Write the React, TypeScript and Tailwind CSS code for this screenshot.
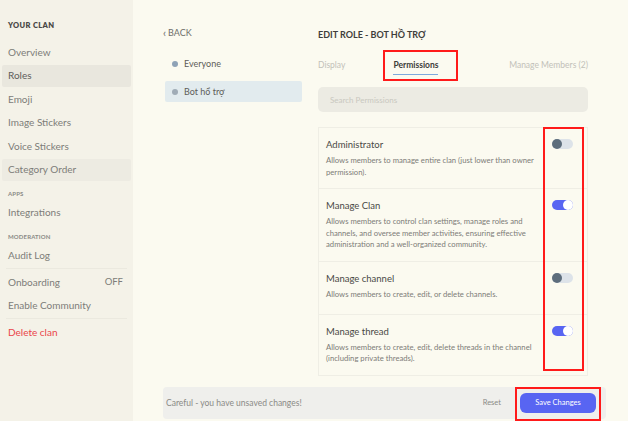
import React from 'react';

type NavItem = { label: string; active?: boolean; soft?: boolean; right?: string; danger?: boolean };

const font = { fontFamily: 'Lato, "Noto Sans", sans-serif' };

// Sidebar groups
const clanItems: NavItem[] = [
  { label: 'Overview' },
  { label: 'Roles', active: true },
  { label: 'Emoji' },
  { label: 'Image Stickers' },
  { label: 'Voice Stickers' },
  { label: 'Category Order', soft: true },
];

const permissions = [
  {
    title: 'Administrator',
    desc: 'Allows members to manage entire clan (just lower than owner permission).',
    on: false,
  },
  {
    title: 'Manage Clan',
    desc: 'Allows members to control clan settings, manage roles and channels, and oversee member activities, ensuring effective administration and a well-organized community.',
    on: true,
  },
  {
    title: 'Manage channel',
    desc: 'Allows members to create, edit, or delete channels.',
    on: false,
  },
  {
    title: 'Manage thread',
    desc: 'Allows members to create, edit, delete threads in the channel (including private threads).',
    on: true,
  },
];

const SideItem: React.FC<{ item: NavItem }> = ({ item }) => (
  <div
    className={`mx-[2px] mb-[1.5px] flex h-[22px] items-center justify-between rounded-[2px] pl-[6px] pr-[6px] text-[10px] ${
      item.active ? 'bg-[#e9e7de] text-[#5e5e5b]' : item.soft ? 'bg-[#edebe2] text-[#7d7d79]' : 'text-[#7d7d79]'
    } ${item.danger ? 'text-[#ea4549]' : ''}`}
  >
    <span>{item.label}</span>
    {item.right && <span className="mr-[2px] text-[9.5px]">{item.right}</span>}
  </div>
);

const GroupLabel: React.FC<{ text: string }> = ({ text }) => (
  <div className="mt-[9px] mb-[4px] h-[8px] pl-[8px] text-[6px] font-bold leading-[8px] tracking-wide text-[#8a8a86]">
    {text}
  </div>
);

const Toggle: React.FC<{ on: boolean }> = ({ on }) => (
  <div
    className={`mt-[1px] flex h-[10px] w-[21px] items-center rounded-full ${
      on ? 'justify-end bg-[#5865f2]' : 'justify-start bg-[#dde3e9]'
    }`}
  >
    <div className={`h-[10px] w-[10px] rounded-full ${on ? 'bg-white' : 'bg-[#5d6d7c]'}`} />
  </div>
);

export default function App() {
  return (
    <div className="flex h-[430px] w-[628px] flex-col overflow-hidden bg-white" style={font}>
      <div className="flex h-[421px]">
        {/* sidebar */}
        <aside className="w-[133px] shrink-0 bg-[#f4f2e8] pt-[21px]">
          <div className="mb-[10px] h-[10px] pl-[8px] text-[7.5px] font-extrabold leading-[10px] tracking-wider text-[#4a4946]">
            YOUR CLAN
          </div>
          {clanItems.map((it) => (
            <SideItem key={it.label} item={it} />
          ))}
          <GroupLabel text="APPS" />
          <SideItem item={{ label: 'Integrations' }} />
          <GroupLabel text="MODERATION" />
          <SideItem item={{ label: 'Audit Log' }} />
          <div className="mx-[6px] mt-[1px] mb-[2px] border-t border-[#ebe9df]" />
          <SideItem item={{ label: 'Onboarding', right: 'OFF' }} />
          <SideItem item={{ label: 'Enable Community' }} />
          <div className="mx-[6px] mb-[2px] border-t border-[#ebe9df]" />
          <SideItem item={{ label: 'Delete clan', danger: true }} />
        </aside>

        {/* main */}
        <main className="relative flex flex-1 flex-col bg-[#fbfaf0] pl-[30px]">
          <div className="flex flex-1 pt-[27px]">
            {/* role list */}
            <div className="w-[139px] shrink-0">
              <div className="flex h-[12px] items-center text-[9px] leading-[12px] text-[#6e6e6a]">
                <span className="mr-[2px] text-[11px] leading-[10px]">‹</span>BACK
              </div>
              <div className="mt-[14px] ml-[2px] flex h-[21px] items-center gap-[6px] pl-[7px] text-[9px] text-[#5d5d59]">
                <span className="h-[6px] w-[6px] rounded-full bg-[#8ea2b6]" />
                Everyone
              </div>
              <div className="mt-[7px] ml-[2px] flex h-[21px] items-center gap-[6px] rounded-[2px] bg-[#e2ebee] pl-[7px] text-[9px] text-[#5d5d59]">
                <span className="h-[6px] w-[6px] rounded-full bg-[#a0acb6]" />
                Bot hổ trợ
              </div>
            </div>

            {/* role editor */}
            <div className="ml-[16px] w-[270px]">
              <div className="mt-[2px] h-[12px] text-[9px] font-bold leading-[12px] text-[#3f3e3b]">
                EDIT ROLE - BOT HỒ TRỢ
              </div>
              <div className="mt-[18px] flex h-[22px] items-start text-[8.5px] leading-[12px]">
                <span className="text-[#c2c1b9]">Display</span>
                <span className="ml-[48px] border-b-[1.5px] border-[#7ea9dc] pb-[3px] font-bold text-[#3d3c39]">
                  Permissions
                </span>
                <span className="ml-auto text-[#c2c1b9]">Manage Members (2)</span>
              </div>
              <div className="mt-[6px] flex h-[25px] items-center rounded-[5px] bg-[#ecebe3] pl-[12px] text-[8px] text-[#c9c8c0]">
                Search Permissions
              </div>
              <div className="mt-[15px] border border-[#efeee5]">
                {permissions.map((p) => (
                  <div
                    key={p.title}
                    className="flex min-h-[53px] border-b border-[#efeee5] pt-[10px] pb-[10px] pl-[7px] last:border-b-0"
                  >
                    <div className="w-[217px]">
                      <div className="text-[9.5px] leading-[14px] text-[#4a4946]">{p.title}</div>
                      <div className="mt-[3px] text-[7.7px] leading-[11.5px] text-[#7d7c78]">{p.desc}</div>
                    </div>
                    <div className="ml-[9px]">
                      <Toggle on={p.on} />
                    </div>
                  </div>
                ))}
              </div>
            </div>
          </div>

          {/* unsaved changes bar */}
          <div className="mb-[2px] flex h-[32px] w-[443px] items-center rounded-[4px] bg-[#efefec] pl-[3px] pr-[10px]">
            <span className="text-[8.5px] text-[#8a8a86]">Careful - you have unsaved changes!</span>
            <span className="ml-auto text-[7.5px] text-[#8a8a86]">Reset</span>
            <button className="ml-[19px] h-[20px] w-[76px] rounded-[6px] bg-[#5865f2] text-[7.5px] text-white">
              Save Changes
            </button>
          </div>

          {/* annotation boxes */}
          <div className="pointer-events-none absolute left-[250px] top-[50px] h-[31px] w-[75px] border-2 border-[#ff1a1a]" />
          <div className="pointer-events-none absolute left-[410px] top-[127px] h-[244px] w-[41px] border-[2.5px] border-[#ff1a1a]" />
          <div className="pointer-events-none absolute left-[382px] top-[387px] h-[34px] w-[86px] border-[2.5px] border-[#ff1a1a]" />
        </main>
      </div>
    </div>
  );
}
